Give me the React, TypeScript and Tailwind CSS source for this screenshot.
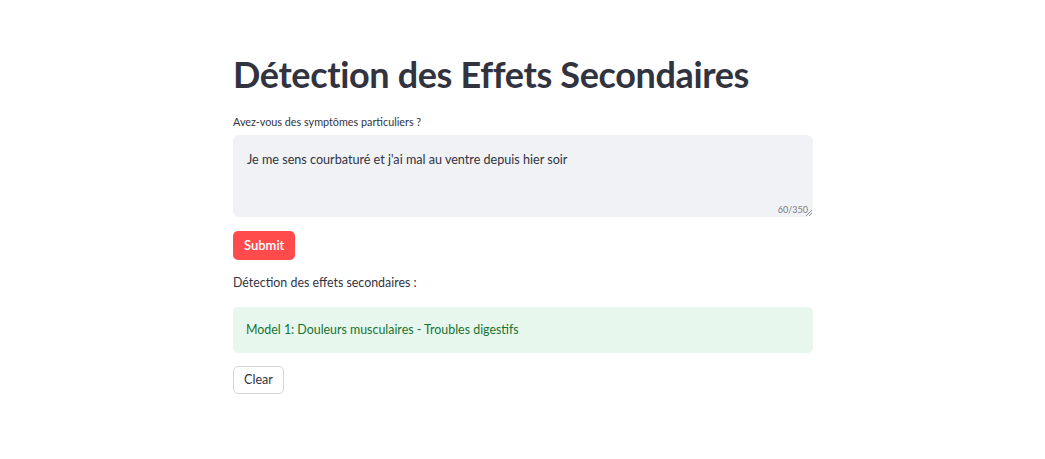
export default function App() {
  return (
    <div className="min-h-screen bg-white text-[#31333f]" style={{ fontFamily: 'Lato, "Open Sans", sans-serif' }}>
      <div className="w-[580px] ml-[233px] pt-[50px] flex flex-col">
        <h1 className="text-[36px] font-bold leading-[48px] tracking-[-0.01em] text-[#31333f]">
          Détection des Effets Secondaires
        </h1>
        <label className="mt-[17px] text-[10.8px] leading-[14px]">Avez-vous des symptômes particuliers ?</label>
        <div className="relative mt-[6px] h-[82px] rounded-[6px] bg-[#f0f2f6] px-[14px] pt-[15px] text-[12.6px] leading-[20px]">
          Je me sens courbaturé et j'ai mal au ventre depuis hier soir
          <span className="absolute right-[5px] bottom-[2px] text-[9px] leading-[10px] text-[#7a7b82]">60/350</span>
          <svg className="absolute right-[1px] bottom-[1px]" width="6" height="6" viewBox="0 0 6 6">
            <path d="M6 0 L0 6 M6 3 L3 6" stroke="#777" strokeWidth="0.8" />
          </svg>
        </div>
        <div className="mt-[14px]">
          <button className="h-[29px] rounded-[5px] bg-[#ff4b4b] px-[11px] text-[13px] font-semibold text-white">
            Submit
          </button>
        </div>
        <p className="mt-[13px] text-[12.4px] leading-[20px]">Détection des effets secondaires :</p>
        <div className="mt-[14px] h-[46px] rounded-[5px] bg-[#e8f7ee] px-[13px] flex items-center text-[12.4px] text-[#177233]">
          Model 1: Douleurs musculaires - Troubles digestifs
        </div>
        <div className="mt-[13px]">
          <button className="h-[28px] rounded-[5px] border border-[#d6d6d9] bg-white px-[10px] text-[12.6px] text-[#31333f]">
            Clear
          </button>
        </div>
      </div>
    </div>
  );
}
